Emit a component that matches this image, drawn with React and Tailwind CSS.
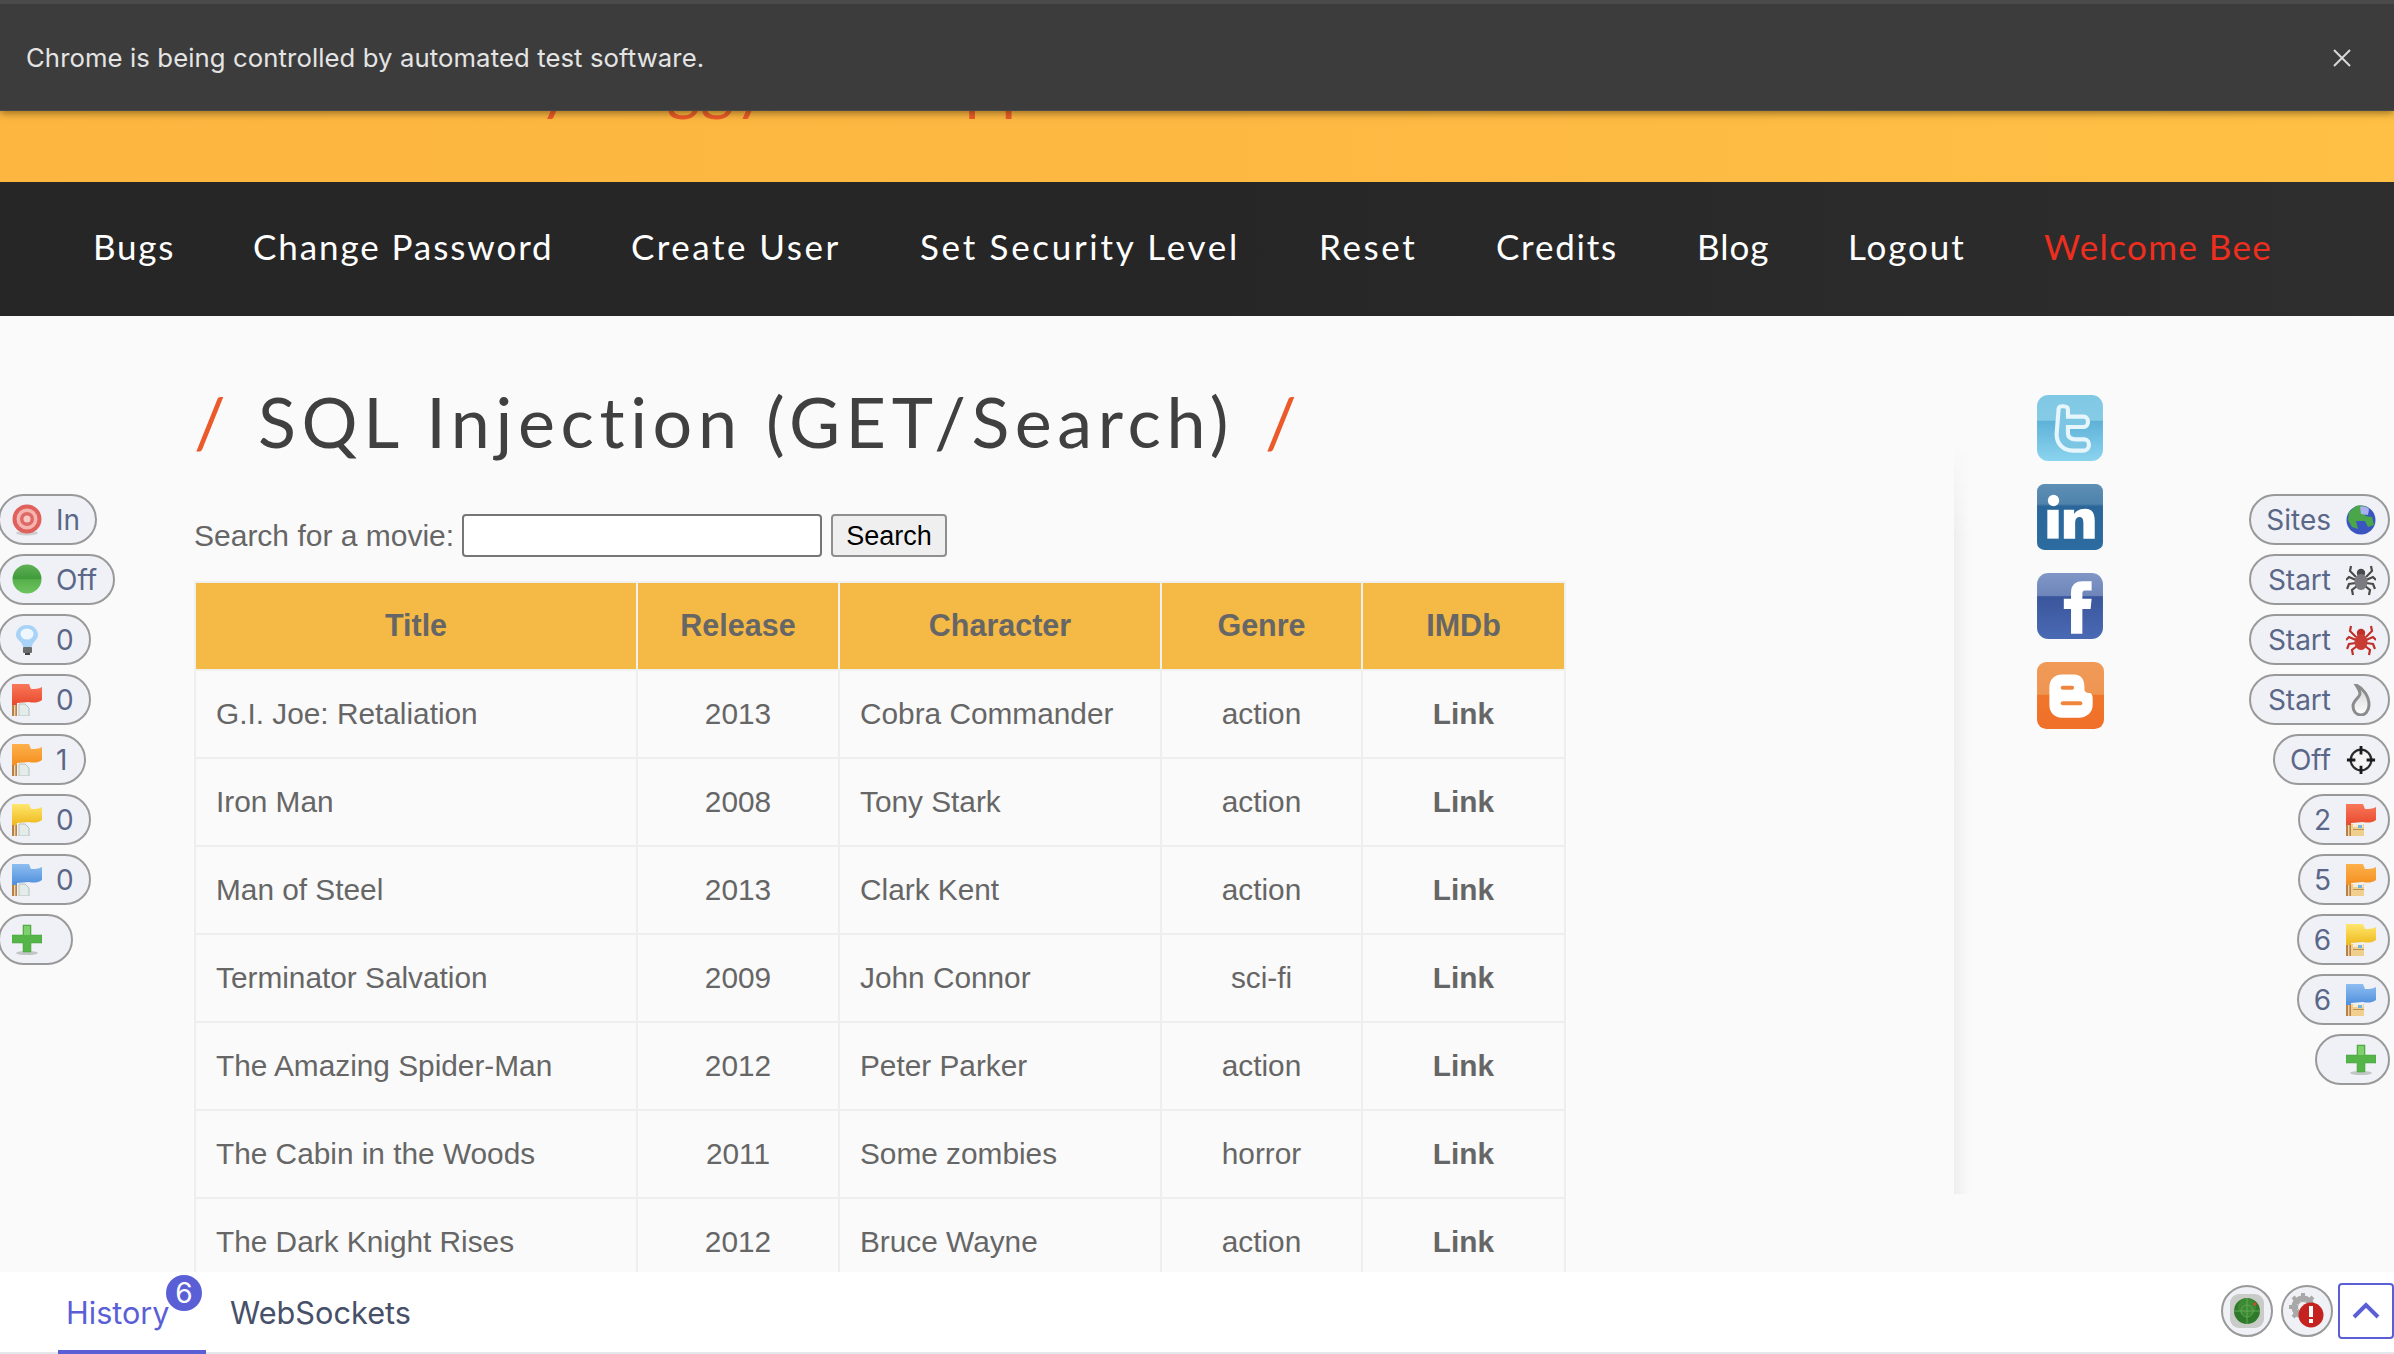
import React from "react";

const RED = ["#f9785a", "#e8492c"];
const ORANGE = ["#fdb04c", "#f48f1f"];
const YELLOW = ["#ffe66d", "#eeb91c"];
const BLUE = ["#8dbdf0", "#4f8fdc"];

function Flag({ c, id, lock }) {
  return (
    <svg width="30" height="32" viewBox="0 0 30 32" className="shrink-0 blur-[0.4px]">
      <defs>
        <linearGradient id={id} x1="0" y1="0" x2="0" y2="1">
          <stop offset="0" stopColor={c[0]} />
          <stop offset="1" stopColor={c[1]} />
        </linearGradient>
      </defs>
      {lock ? (
        <g>
          <rect x="1" y="20" width="17" height="12" fill="#efce8e" />
          <rect x="7" y="20" width="10" height="3" fill="#fff" opacity="0.6" />
          <rect x="12" y="21" width="4" height="3" fill="#6fb7e8" />
          <rect x="7" y="25" width="11" height="1" fill="#b7925a" />
        </g>
      ) : (
        <path d="M7 20 L13 20 L17 24 L17 32 L7 32 Z" fill="#e4ecea" stroke="#b4c2be" strokeWidth="1" />
      )}
      <rect x="0" y="14" width="5" height="18" fill="#b98045" />
      <rect x="2" y="14" width="1.4" height="18" fill="#ecd2a8" />
      <path d="M0 0 C6 0 12 0 17 0 L19 5 C23 5 26 5 30 3 L30 16 C26 19 21 19 17 18 L5 19 L5 21 L0 21 Z" fill={`url(#${id})`} />
    </svg>
  );
}

function Plus() {
  return (
    <svg width="30" height="32" viewBox="0 0 30 32" className="shrink-0 blur-[0.4px]">
      <ellipse cx="15" cy="29" rx="11" ry="2" fill="#9aa09a" opacity="0.55" />
      <path d="M11 1 H19 V11 H30 V19 H19 V28 H11 V19 H0 V11 H11 Z" fill="#56b548" stroke="#3f9a38" strokeWidth="0.5" />
      <rect x="12" y="2" width="6" height="9" fill="#7ed06c" />
    </svg>
  );
}

function Target() {
  return (
    <svg width="30" height="32" viewBox="0 0 30 32" className="shrink-0 blur-[0.4px]">
      <ellipse cx="15" cy="29" rx="11" ry="2.5" fill="#bfbfbf" opacity="0.7" />
      <circle cx="15" cy="15" r="14.5" fill="#e0605c" />
      <circle cx="15" cy="15" r="10.5" fill="#f4b4b0" />
      <circle cx="15" cy="15" r="7" fill="#dd6a66" />
      <circle cx="15" cy="15" r="3.5" fill="#f7c8c4" />
    </svg>
  );
}

function Ball() {
  return (
    <svg width="30" height="32" viewBox="0 0 30 32" className="shrink-0 blur-[0.4px]">
      <defs>
        <linearGradient id="ballg" x1="0" y1="0" x2="0" y2="1">
          <stop offset="0" stopColor="#5fb055" />
          <stop offset="0.5" stopColor="#3f9a3a" />
          <stop offset="0.52" stopColor="#58b04c" />
          <stop offset="1" stopColor="#6cc45e" />
        </linearGradient>
      </defs>
      <circle cx="15" cy="15" r="14.5" fill="url(#ballg)" />
    </svg>
  );
}

function Bulb() {
  return (
    <svg width="30" height="32" viewBox="0 0 30 32" className="shrink-0 blur-[0.4px]">
      <path d="M15 1 C22 1 26 6 26 11 C26 16 20 18 20 23 H11 C11 18 4 16 4 11 C4 6 8 1 15 1 Z" fill="#a9d2f7" />
      <ellipse cx="15" cy="10" rx="6.5" ry="5.5" fill="#eef7ff" />
      <rect x="11" y="23" width="9" height="6" rx="1" fill="#6b6b6b" />
      <rect x="13" y="29" width="5" height="2" fill="#444" />
    </svg>
  );
}

function Globe() {
  return (
    <svg width="30" height="30" viewBox="0 0 30 30" className="shrink-0 blur-[0.4px]">
      <circle cx="15" cy="15" r="14.5" fill="#3a55c0" />
      <path d="M10 1 C14 0 20 1 22 3 L19 11 L26 12 L28 20 L22 22 L19 16 L10 16 L12 24 L6 22 L2 15 L3 7 Z" fill="#4aa648" />
      <path d="M14 2 C18 1 21 2 23 4 L22 10 L15 9 Z" fill="#a8b0ee" />
    </svg>
  );
}

function Spider({ body, leg }) {
  const legs = ["M10 13 L4 7 L5 2", "M20 13 L26 7 L25 2", "M10 16 L3 13 L0 16", "M20 16 L27 13 L30 16", "M10 19 L3 20 L1 25", "M20 19 L27 20 L29 25", "M11 22 L6 26 L7 31", "M19 22 L24 26 L23 31"];
  return (
    <svg width="30" height="32" viewBox="0 0 30 32" className="shrink-0 blur-[0.3px]">
      {legs.map((d) => (
        <path key={d} d={d} fill="none" stroke={leg} strokeWidth="2.2" />
      ))}
      <circle cx="15" cy="9" r="4.2" fill={leg} />
      <ellipse cx="15" cy="18" rx="6.5" ry="8" fill={body} />
    </svg>
  );
}

function Drop() {
  return (
    <svg width="30" height="32" viewBox="0 0 30 32" className="shrink-0 blur-[0.4px]">
      <defs>
        <linearGradient id="dropg" x1="0" y1="0" x2="0" y2="1">
          <stop offset="0" stopColor="#d0d0d0" />
          <stop offset="1" stopColor="#ffffff" />
        </linearGradient>
      </defs>
      <path d="M10 1 C17 4 23 12 23 21 C23 27 19 31 15 31 C10 31 7 27 7 22 C7 17 13 14 14 10 C14 7 12 4 10 1 Z" fill="url(#dropg)" stroke="#8c8c8c" strokeWidth="3" />
    </svg>
  );
}

function Cross() {
  return (
    <svg width="30" height="32" viewBox="0 0 32 32" className="shrink-0">
      <circle cx="16" cy="16" r="11" fill="#f4f4f4" stroke="#2b2b2b" strokeWidth="2.4" />
      <path d="M16 1 V10 M16 22 V31 M1 16 H10 M22 16 H31" stroke="#1a1a1a" strokeWidth="3" />
    </svg>
  );
}

function Radar() {
  return (
    <svg width="36" height="36" viewBox="0 0 36 36" className="blur-[0.4px]">
      <rect x="1" y="1" width="34" height="34" rx="9" fill="#c9cbc9" />
      <circle cx="18" cy="18" r="13" fill="#2f7a2a" />
      <circle cx="18" cy="14" r="9" fill="#4c9a3e" opacity="0.5" />
      <path d="M18 5 V31 M5 18 H31" stroke="#62a755" strokeWidth="1" />
      <circle cx="18" cy="18" r="6" fill="none" stroke="#62a755" strokeWidth="1" />
      <circle cx="26" cy="11" r="1.6" fill="#e0452c" />
    </svg>
  );
}

function GearAlert() {
  return (
    <svg width="36" height="36" viewBox="0 0 36 36" className="blur-[0.3px]">
      <circle cx="14" cy="14" r="9" fill="none" stroke="#a8a8a8" strokeWidth="5" />
      <path d="M14 0 V28 M0 14 H28 M4 4 L24 24 M24 4 L4 24" stroke="#a8a8a8" strokeWidth="4" />
      <circle cx="14" cy="14" r="5" fill="#f0f1f6" />
      <circle cx="22" cy="22" r="12.5" fill="#c5231f" />
      <rect x="20" y="13" width="4" height="11" fill="#fff" />
      <rect x="20" y="26" width="4" height="4" fill="#fff" />
    </svg>
  );
}

function Twitter() {
  return (
    <svg width="68" height="68" viewBox="0 0 66 66" className="blur-[0.5px]">
      <defs>
        <linearGradient id="twg" x1="0" y1="0" x2="0" y2="1">
          <stop offset="0" stopColor="#7fc8e4" />
          <stop offset="0.38" stopColor="#86cbe6" />
          <stop offset="0.4" stopColor="#5fb2d8" />
          <stop offset="1" stopColor="#8bd4ef" />
        </linearGradient>
      </defs>
      <rect x="1" y="1" width="64" height="64" rx="11" fill="url(#twg)" />
      <path d="M22 14 C22 11 31 11 31 15 V22 H46 C52 22 52 32 46 32 H31 V38 C31 43 35 44 39 44 H47 C53 44 53 55 46 55 H36 C26 55 20 48 20 39 Z" fill="#7cc6e4" stroke="#e6f6fc" strokeWidth="4" />
    </svg>
  );
}

function LinkedIn() {
  return (
    <svg width="68" height="68" viewBox="0 0 66 66" className="blur-[0.4px]">
      <defs>
        <linearGradient id="lig" x1="0" y1="0" x2="0" y2="1">
          <stop offset="0" stopColor="#5e8fb5" />
          <stop offset="0.3" stopColor="#4f83ac" />
          <stop offset="0.34" stopColor="#2a6699" />
          <stop offset="1" stopColor="#2d6ca0" />
        </linearGradient>
      </defs>
      <rect x="1" y="1" width="64" height="64" rx="7" fill="url(#lig)" />
      <circle cx="17" cy="17" r="5.5" fill="#fff" />
      <rect x="11" y="26" width="11" height="28" fill="#fff" />
      <path d="M27 26 H37 V30 C40 26 44 25 48 25 C55 25 57 30 57 37 V54 H46 V39 C46 35 45 33 42 33 C39 33 38 36 38 39 V54 H27 Z" fill="#fff" />
    </svg>
  );
}

function Facebook() {
  return (
    <svg width="68" height="68" viewBox="0 0 66 66" className="blur-[0.4px]">
      <defs>
        <linearGradient id="fbg" x1="0" y1="0" x2="0" y2="1">
          <stop offset="0" stopColor="#7f96c6" />
          <stop offset="0.34" stopColor="#6f86ba" />
          <stop offset="0.36" stopColor="#3a569c" />
          <stop offset="1" stopColor="#4a6ab4" />
        </linearGradient>
      </defs>
      <rect x="1" y="1" width="64" height="64" rx="11" fill="url(#fbg)" />
      <path d="M34 60 V36 H27 V26 H34 V20 C34 12 39 9 45 9 H54 V18 H48 C45 18 45 20 45 22 V26 H54 L53 36 H45 V60 Z" fill="#fff" />
    </svg>
  );
}

function Blogger() {
  return (
    <svg width="68" height="68" viewBox="1 0 66 66" className="blur-[0.3px]">
      <defs>
        <linearGradient id="blg" x1="0" y1="0" x2="0" y2="1">
          <stop offset="0" stopColor="#f09a58" />
          <stop offset="0.48" stopColor="#ef9552" />
          <stop offset="0.5" stopColor="#f0752a" />
          <stop offset="1" stopColor="#f0702a" />
        </linearGradient>
      </defs>
      <rect x="2" y="1" width="65" height="65" rx="9" fill="url(#blg)" />
      <path d="M26 13 H38 C45 13 48 18 48 25 V28 C48 30 50 31 52 31 C55 31 56 33 56 36 V43 C56 50 50 55 43 55 H26 C19 55 14 50 14 43 V25 C14 18 19 13 26 13 Z" fill="#fff" />
      <rect x="25" y="24" width="13" height="4" rx="2" fill="#f0853e" />
      <rect x="25" y="39" width="21" height="4" rx="2" fill="#f0853e" />
    </svg>
  );
}

function Pill({ side, icon, label, w }) {
  return (
    <div
      style={{ width: w }}
      className={`h-[51px] shrink-0 rounded-full border-2 border-[#999999] bg-[#f0f1f6] flex items-center text-[28px] text-[#5a6788] font-['Inter',sans-serif] ${
        side === "left" ? "-ml-[2px] pl-[12px] gap-[14px]" : "justify-end pr-[12px] gap-[15px]"
      }`}
    >
      {side === "left" ? (
        <>
          {icon}
          {label && <span>{label}</span>}
        </>
      ) : (
        <>
          {label && <span>{label}</span>}
          {icon}
        </>
      )}
    </div>
  );
}

const NAV = [
  ["Bugs", 81, "text-white", "tracking-[1.8px]"],
  ["Change Password", 299, "text-white", "tracking-[1.9px]"],
  ["Create User", 210, "text-white", "tracking-[2.5px]"],
  ["Set Security Level", 320, "text-white", "tracking-[2.7px]"],
  ["Reset", 98, "text-white", "tracking-[2.6px]"],
  ["Credits", 122, "text-white", "tracking-[1.8px]"],
  ["Blog", 72, "text-white", "tracking-[1px]"],
  ["Logout", 117, "text-white", "tracking-[1.9px]"],
  ["Welcome Bee", 228, "text-[#ee2f1f]", "tracking-[1.4px]"],
];

const ROWS = [
  ["G.I. Joe: Retaliation", "2013", "Cobra Commander", "action"],
  ["Iron Man", "2008", "Tony Stark", "action"],
  ["Man of Steel", "2013", "Clark Kent", "action"],
  ["Terminator Salvation", "2009", "John Connor", "sci-fi"],
  ["The Amazing Spider-Man", "2012", "Peter Parker", "action"],
  ["The Cabin in the Woods", "2011", "Some zombies", "horror"],
  ["The Dark Knight Rises", "2012", "Bruce Wayne", "action"],
];

export default function App() {
  return (
    <div className="relative h-[1354px] w-[2394px] overflow-hidden flex flex-col bg-[#fafafa]">
      <div className="absolute left-0 top-0 w-full h-[111px] z-20 bg-[#3c3c3c] border-t-[4px] border-b border-[#4a4a4a] shadow-[0_2px_8px_rgba(60,40,0,0.55)] flex items-center justify-between pl-[26px] pr-[42px] font-['Inter',sans-serif] text-[#e4e4e4]">
        <span className="text-[25.7px] tracking-[0.1px] pt-[3px]">Chrome is being controlled by automated test software.</span>
        <svg width="20" height="20" viewBox="0 0 20 20" className="mt-[1px]">
          <path d="M2 2 L18 18 M18 2 L2 18" stroke="#d8d8d8" strokeWidth="2" />
        </svg>
      </div>

      <header className="relative h-[182px] shrink-0 bg-gradient-to-r from-[#fdb740] via-[#fdb842] to-[#ffc045] overflow-hidden">
        <div className="absolute left-[197px] top-[52px] text-[64px] leading-none whitespace-nowrap text-[#ef5a2a] font-['Lato',sans-serif] tracking-[0.6px] [word-spacing:6px]">
          an extremely buggy web app !
        </div>
      </header>

      <nav className="h-[134px] shrink-0 bg-gradient-to-r from-[#262626] via-[#262626] to-[#2e2e2e] flex items-center gap-[79px] pl-[93px] pb-[5px] font-['Lato',sans-serif] font-normal text-[35px]">
        {NAV.map(([t, w, c, tr]) => (
          <a key={t} style={{ width: w }} className={`block whitespace-nowrap ${c} ${tr}`}>
            {t}
          </a>
        ))}
      </nav>

      <main className="flex-1 min-h-0 overflow-hidden flex">
        <aside className="w-[194px] shrink-0 pt-[178px] flex flex-col gap-[9px]">
          <Pill side="left" w={99} icon={<Target />} label="In" />
          <Pill side="left" w={117} icon={<Ball />} label="Off" />
          <Pill side="left" w={93} icon={<Bulb />} label="0" />
          <Pill side="left" w={93} icon={<Flag c={RED} id="l1" />} label="0" />
          <Pill side="left" w={88} icon={<Flag c={ORANGE} id="l2" />} label="1" />
          <Pill side="left" w={93} icon={<Flag c={YELLOW} id="l3" />} label="0" />
          <Pill side="left" w={93} icon={<Flag c={BLUE} id="l4" />} label="0" />
          <Pill side="left" w={75} icon={<Plus />} />
        </aside>

        <section className="w-[1370px] shrink-0 pt-[61px] font-['Liberation_Sans',sans-serif] text-[#666666]">
          <h1 className="h-[88px] flex items-center whitespace-nowrap font-['Lato',sans-serif] font-normal text-[70px] text-[#404040]">
            <span className="text-[#ec5a2b] w-[64px]">/</span>
            <span className="w-[1007px] tracking-[5.6px]">SQL Injection (GET/Search)</span>
            <span className="text-[#ec5a2b]">/</span>
          </h1>
          <form className="mt-[49px] h-[43px] flex items-center text-[30px]">
            <label className="whitespace-nowrap w-[268px]">Search for a movie:</label>
            <input className="w-[360px] h-[43px] bg-white border-2 border-[#767676] rounded-[4px]" />
            <button type="button" className="ml-[9px] w-[116px] h-[43px] pb-[2px] bg-[#efefef] border-2 border-[#8f8f8f] rounded-[4px] text-[27px] text-black">
              Search
            </button>
          </form>
          <table className="mt-[24px] w-[1370px] table-fixed border-collapse text-[29.8px]">
            <colgroup>
              <col className="w-[442px]" />
              <col className="w-[202px]" />
              <col className="w-[322px]" />
              <col className="w-[201px]" />
              <col className="w-[203px]" />
            </colgroup>
            <thead>
              <tr className="h-[88px] bg-[#f5b945]">
                {["Title", "Release", "Character", "Genre", "IMDb"].map((h) => (
                  <th key={h} className="border-2 border-[#f0f0f0] text-center font-bold text-[30.5px]">
                    {h}
                  </th>
                ))}
              </tr>
            </thead>
            <tbody>
              {ROWS.map((r) => (
                <tr key={r[0]} className="h-[88px]">
                  <td className="border-2 border-[#eeeeee] pl-[20px]">{r[0]}</td>
                  <td className="border-2 border-[#eeeeee] text-center">{r[1]}</td>
                  <td className="border-2 border-[#eeeeee] pl-[20px]">{r[2]}</td>
                  <td className="border-2 border-[#eeeeee] text-center">{r[3]}</td>
                  <td className="border-2 border-[#eeeeee] text-center font-bold">Link</td>
                </tr>
              ))}
            </tbody>
          </table>
        </section>

        <div className="w-[406px] shrink-0 flex justify-end pt-[130px] h-[878px]">
          <div className="w-[16px] h-full bg-gradient-to-r from-[#eeeeee] to-[#fafafa] [mask-image:linear-gradient(to_bottom,transparent,black_12%)]" />
        </div>

        <div className="w-[68px] ml-[66px] shrink-0 pt-[78px] flex flex-col gap-[21px]">
          <Twitter />
          <LinkedIn />
          <Facebook />
          <Blogger />
        </div>

        <aside className="flex-1 min-w-0 pt-[178px] pr-[4px] flex flex-col items-end gap-[9px]">
          <Pill side="right" w={141} icon={<Globe />} label="Sites" />
          <Pill side="right" w={141} icon={<Spider body="#7a7a80" leg="#4a4a4a" />} label="Start" />
          <Pill side="right" w={141} icon={<Spider body="#c93c34" leg="#c02f28" />} label="Start" />
          <Pill side="right" w={141} icon={<Drop />} label="Start" />
          <Pill side="right" w={117} icon={<Cross />} label="Off" />
          <Pill side="right" w={92} icon={<Flag c={RED} id="r1" lock />} label="2" />
          <Pill side="right" w={92} icon={<Flag c={ORANGE} id="r2" lock />} label="5" />
          <Pill side="right" w={93} icon={<Flag c={YELLOW} id="r3" lock />} label="6" />
          <Pill side="right" w={93} icon={<Flag c={BLUE} id="r4" lock />} label="6" />
          <Pill side="right" w={75} icon={<Plus />} />
        </aside>
      </main>

      <footer className="relative h-[82px] shrink-0 bg-white border-b-2 border-[#e5e5ec] flex items-stretch justify-between pl-[58px] font-['Inter',sans-serif]">
        <div className="flex items-stretch gap-[24px]">
          <div className="relative w-[148px] border-b-[4px] -mb-[2px] border-[#5a5fd6] pl-[8px] pt-[4px] flex items-center text-[30.6px] text-[#5a5fd6]">
            History
            <span className="absolute left-[108px] top-[3px] w-[36px] h-[36px] rounded-full bg-[#5a5fd6] text-white text-[28px] flex items-center justify-center">
              6
            </span>
          </div>
          <div className="flex items-center pt-[2px] text-[30.7px] text-[#475069]">WebSockets</div>
        </div>
        <div className="flex items-center gap-[8px] pb-[2px]">
          <div className="w-[52px] h-[52px] rounded-full border-2 border-[#999999] bg-[#f0f1f6] flex items-center justify-center">
            <Radar />
          </div>
          <div className="w-[52px] h-[52px] rounded-full border-2 border-[#999999] bg-[#f0f1f6] flex items-center justify-center">
            <GearAlert />
          </div>
          <div className="-ml-[3px] w-[56px] h-[56px] rounded-[4px] border-2 border-[#5a5fd6] flex items-center justify-center">
            <svg width="28" height="18" viewBox="0 0 28 18">
              <path d="M2 15 L14 3 L26 15" fill="none" stroke="#5a5fd6" strokeWidth="4" />
            </svg>
          </div>
        </div>
      </footer>
    </div>
  );
}
